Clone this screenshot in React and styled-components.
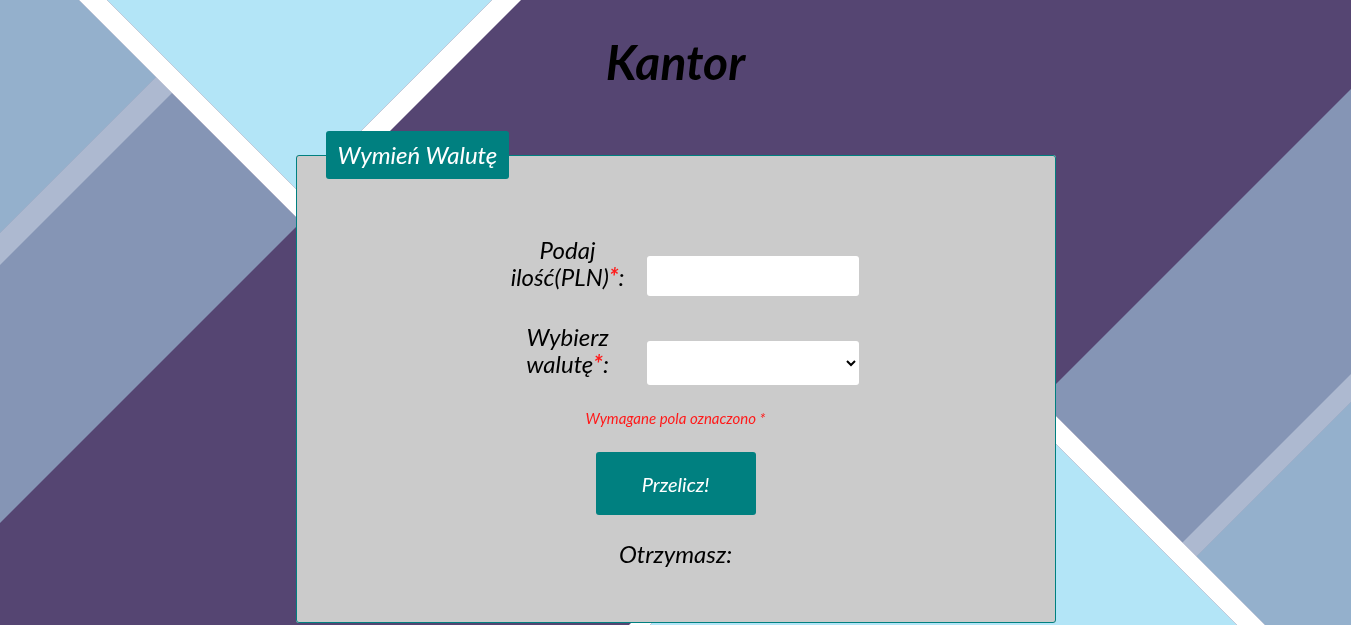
import React from "react";
import styled, { createGlobalStyle } from "styled-components";

const GlobalStyle = createGlobalStyle`
  html {
    background-color: #554572;
  }
  body {
    margin: 0;
    padding: 0;
    font-family: Lato, "Open Sans", sans-serif;
    font-style: italic;
    color: #000;
  }
`;

const Backdrop = () => (
  <BackdropSvg viewBox="0 0 1351 625" preserveAspectRatio="none">
    <rect x="0" y="0" width="1351" height="625" fill="#554572" />
    {/* top left */}
    <polygon points="0,0 79,0 301,222 0,523" fill="#8595b5" />
    <polygon points="0,0 79,0 156,77 0,233" fill="#94b0cc" />
    <polygon points="156,77 172,93 0,265 0,233" fill="#adb9d0" />
    <polygon points="107,0 492,0 299.5,192.5" fill="#b3e5f7" />
    <polygon points="492,0 521,0 314,207 299.5,192.5" fill="#ffffff" />
    <polygon points="79,0 107,0 315,208 301,222" fill="#ffffff" />
    {/* bottom right */}
    <polygon points="1351,89 1040,400 1265,625 1351,625" fill="#8595b5" />
    <polygon points="1351,402 1196.5,556.5 1265,625 1351,625" fill="#94b0cc" />
    <polygon points="1351,374 1182.5,542.5 1196.5,556.5 1351,402" fill="#adb9d0" />
    <polygon points="943.5,331.5 1237,625 650,625" fill="#b3e5f7" />
    <polygon points="629,625 650,625 943.5,331.5 933,321" fill="#ffffff" />
    <polygon points="947,307 1265,625 1237,625 933,321" fill="#ffffff" />
  </BackdropSvg>
);

const App = () => {
  return (
    <Page>
      <GlobalStyle />
      <Backdrop />
      <Title>Kantor</Title>
      <Card>
        <Legend>Wymień Walutę</Legend>
        <Row>
          <Label htmlFor="amount">
            Podaj ilość(PLN)<Star>*</Star>:
          </Label>
          <Input id="amount" type="text" $offset={20} />
        </Row>
        <Row>
          <Label htmlFor="currency">
            Wybierz walutę<Star>*</Star>:
          </Label>
          <Select id="currency" defaultValue="" $offset={18}>
            <option value=""></option>
            <option value="EUR">EUR</option>
            <option value="USD">USD</option>
          </Select>
        </Row>
        <Note>Wymagane pola oznaczono *</Note>
        <Button type="button">Przelicz!</Button>
        <Result>Otrzymasz:</Result>
      </Card>
    </Page>
  );
};

const BackdropSvg = styled.svg`
  position: fixed;
  inset: 0;
  width: 100%;
  height: 100%;
  z-index: -1;
`;

const Page = styled.main`
  display: flow-root;
  text-align: center;
`;

const Title = styled.h1`
  margin: 33px 0 40px;
  font-size: 48px;
  line-height: 58px;
  font-weight: 700;
  font-style: italic;
  color: #000;
`;

const Card = styled.fieldset`
  box-sizing: border-box;
  width: 760px;
  margin: 0 auto;
  padding: 57px 0 54px;
  background-color: #cbcbcb;
  border: 1px solid #008080;
  border-radius: 3px;
  display: flex;
  flex-direction: column;
  align-items: center;
`;

const Legend = styled.legend`
  margin-left: 29px;
  padding: 9px 12px;
  text-align: left;
  background-color: #008080;
  color: #fff;
  border-radius: 3px;
  font-size: 24px;
  line-height: 30px;
`;

const Row = styled.div`
  display: grid;
  grid-template-columns: 136px 212px;
  column-gap: 11px;
  align-items: start;
  margin-left: 7px;

  & + & {
    margin-top: 27px;
  }
`;

const Label = styled.label`
  font-size: 24px;
  line-height: 27px;
  text-align: center;
`;

const Star = styled.span`
  color: #ff1a1a;
  font-weight: 700;
`;

const Input = styled.input`
  box-sizing: border-box;
  width: 212px;
  height: 40px;
  margin-top: ${(p) => p.$offset}px;
  border: none;
  border-radius: 3px;
  background: #fff;
  font-family: inherit;
  font-size: 16px;
  padding: 0 8px;
  outline: none;
`;

const Select = styled.select`
  box-sizing: border-box;
  width: 212px;
  height: 44px;
  margin-top: ${(p) => p.$offset}px;
  border: none;
  border-radius: 3px;
  background-color: #fff;
  font-family: inherit;
  font-size: 16px;
  outline: none;
`;

const Note = styled.p`
  margin: 24px 0 0;
  font-size: 15px;
  line-height: 18px;
  color: #ff1a1a;
`;

const Button = styled.button`
  margin-top: 25px;
  width: 160px;
  height: 63px;
  border: none;
  border-radius: 3px;
  background-color: #008080;
  color: #fff;
  font-family: inherit;
  font-style: italic;
  font-size: 20px;
  cursor: pointer;
`;

const Result = styled.p`
  margin: 24px 0 0;
  font-size: 24px;
  line-height: 29px;
`;

export default App;
